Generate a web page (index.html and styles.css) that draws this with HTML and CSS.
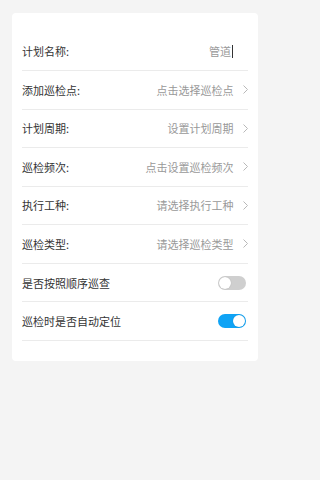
FILE: index.html
```html
<!DOCTYPE html>
<html lang="zh">
<head>
<meta charset="utf-8">
<meta name="viewport" content="width=device-width, initial-scale=1">
<link rel="stylesheet" href="styles.css">
</head>
<body>
<div class="card">
  <div class="row">
    <span class="label">计划名称:</span>
    <span class="input"><span class="typed">管道</span><span class="caret"></span></span>
  </div>
  <div class="row">
    <span class="label">添加巡检点:</span>
    <span class="value">点击选择巡检点</span>
    <svg class="chev" width="5" height="9" viewBox="0 0 5 9"><polyline points="0.5,0.5 4.5,4.5 0.5,8.5" fill="none" stroke="#b8b8b8" stroke-width="1"/></svg>
  </div>
  <div class="row">
    <span class="label">计划周期:</span>
    <span class="value">设置计划周期</span>
    <svg class="chev" width="5" height="9" viewBox="0 0 5 9"><polyline points="0.5,0.5 4.5,4.5 0.5,8.5" fill="none" stroke="#b8b8b8" stroke-width="1"/></svg>
  </div>
  <div class="row">
    <span class="label">巡检频次:</span>
    <span class="value">点击设置巡检频次</span>
    <svg class="chev" width="5" height="9" viewBox="0 0 5 9"><polyline points="0.5,0.5 4.5,4.5 0.5,8.5" fill="none" stroke="#b8b8b8" stroke-width="1"/></svg>
  </div>
  <div class="row">
    <span class="label">执行工种:</span>
    <span class="value">请选择执行工种</span>
    <svg class="chev" width="5" height="9" viewBox="0 0 5 9"><polyline points="0.5,0.5 4.5,4.5 0.5,8.5" fill="none" stroke="#b8b8b8" stroke-width="1"/></svg>
  </div>
  <div class="row">
    <span class="label">巡检类型:</span>
    <span class="value">请选择巡检类型</span>
    <svg class="chev" width="5" height="9" viewBox="0 0 5 9"><polyline points="0.5,0.5 4.5,4.5 0.5,8.5" fill="none" stroke="#b8b8b8" stroke-width="1"/></svg>
  </div>
  <div class="row">
    <span class="label">是否按照顺序巡查</span>
    <span class="switch"><span class="knob"></span></span>
  </div>
  <div class="row">
    <span class="label">巡检时是否自动定位</span>
    <span class="switch on"><span class="knob"></span></span>
  </div>
</div>
</body>
</html>
```
FILE: styles.css
```css
html {
  margin: 0;
  padding: 0;
  background: #f4f4f4;
}
body {
  margin: 0;
  width: 270px;
  min-height: 480px;
  font-family: "Noto Sans CJK SC", "Noto Sans", sans-serif;
  font-size: 11px;
  color: #333;
  padding-top: 13px;
  box-sizing: border-box;
}
.card {
  margin: 0 12px;
  background: #fff;
  border-radius: 4px;
  padding: 19.4px 10px 20px;
}
.row {
  box-sizing: border-box;
  height: 38.57px;
  border-bottom: 1px solid #ebebeb;
  display: flex;
  align-items: center;
}
.label {
  flex: 1;
  color: #333;
  white-space: nowrap;
}
.value {
  color: #999;
  white-space: nowrap;
}
.chev {
  margin-left: 9px;
  margin-right: 0.5px;
  display: block;
}
.input {
  display: flex;
  align-items: center;
  padding-right: 15px;
}
.typed {
  color: #999;
}
.caret {
  display: block;
  width: 1px;
  height: 13px;
  background: #333;
  margin-left: 1px;
}
.switch {
  position: relative;
  width: 28px;
  height: 14px;
  border-radius: 7px;
  background: #cfcfcf;
  margin-right: 2px;
}
.switch .knob {
  position: absolute;
  top: 1px;
  left: 1px;
  width: 12px;
  height: 12px;
  border-radius: 50%;
  background: #fff;
  box-shadow: 0 0 1px rgba(0,0,0,0.25);
}
.switch.on {
  background: #0fa3f5;
}
.switch.on .knob {
  left: 15px;
}
```
